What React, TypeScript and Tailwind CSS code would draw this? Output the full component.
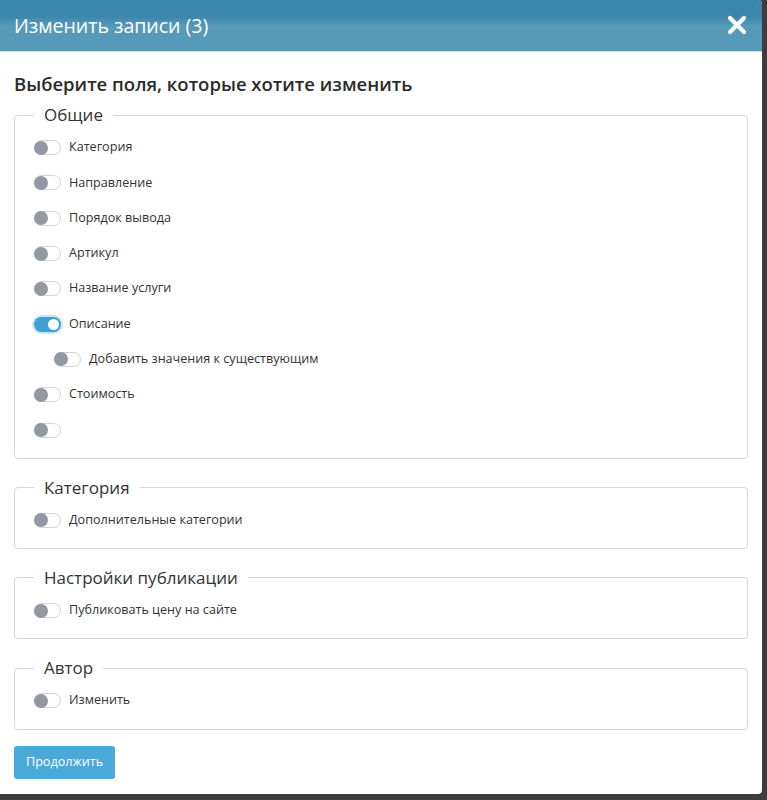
import React from "react";

type Field = { label: string; on?: boolean; nested?: boolean };

const general: Field[] = [
  { label: "Категория" },
  { label: "Направление" },
  { label: "Порядок вывода" },
  { label: "Артикул" },
  { label: "Название услуги" },
  { label: "Описание", on: true },
  { label: "Добавить значения к существующим", nested: true },
  { label: "Стоимость" },
  { label: "" },
];

const groups: { title: string; fields: Field[] }[] = [
  { title: "Категория", fields: [{ label: "Дополнительные категории" }] },
  { title: "Настройки публикации", fields: [{ label: "Публиковать цену на сайте" }] },
  { title: "Автор", fields: [{ label: "Изменить" }] },
];

const Toggle = ({ on }: { on?: boolean }) =>
  on ? (
    <span className="flex h-[15px] w-[27px] shrink-0 items-center justify-end rounded-full bg-[#3f9fd3] pr-[2px] ring-[2px] ring-[#c9e4f3]">
      <span className="h-[11px] w-[11px] rounded-full bg-white" />
    </span>
  ) : (
    <span className="flex h-[15px] w-[27px] shrink-0 items-center rounded-full border border-[#d2d2d2] bg-white">
      <span className="-ml-px h-[14px] w-[14px] rounded-full bg-[#9399a2]" />
    </span>
  );

const Row = ({ field }: { field: Field }) => (
  <div className={`flex h-[35.3px] items-center gap-2 ${field.nested ? "pl-5" : ""}`}>
    <Toggle on={field.on} />
    {field.label && <span className="text-[12.6px] text-[#333]">{field.label}</span>}
  </div>
);

const Group = ({ title, fields, first }: { title: string; fields: Field[]; first?: boolean }) => (
  <fieldset
    className={`rounded-[4px] border border-[#d6d6d6] px-[19px] pb-[10px] pt-[3px] ${first ? "" : "mt-[17px]"}`}
  >
    <legend className="px-[10px] text-[17px] leading-[24px] text-[#333]">{title}</legend>
    {fields.map((f, i) => (
      <Row key={i} field={f} />
    ))}
  </fieldset>
);

export default function App() {
  return (
    <div
      className="h-[800px] w-[767px] overflow-hidden bg-[#3d3d3d]"
      style={{ fontFamily: '"Open Sans", "Noto Sans", sans-serif' }}
    >
      <div className="flex h-[794px] w-[762px] flex-col overflow-hidden rounded-r-[4px] bg-white">
        <div className="flex h-[52px] shrink-0 items-center justify-between border-b border-[#d3e6f0] bg-[linear-gradient(#3a86ab_0,#3a86ab_16px,#5799b8_26px,#5799b8_100%)] pl-[14px] pr-[15px] pt-[1px]">
          <h1 className="text-[19.5px] leading-none text-white">Изменить записи (3)</h1>
          <svg width="20" height="20" viewBox="0 0 20 20" className="mt-[-2px]">
            <path d="M3 3 L17 17 M17 3 L3 17" stroke="white" strokeWidth="4.2" strokeLinecap="round" />
          </svg>
        </div>
        <div className="flex flex-1 flex-col px-[14px]">
          <h2 className="mt-[20px] text-[18.5px] font-semibold leading-[24px] text-[#2b2b2b]">
            Выберите поля, которые хотите изменить
          </h2>
          <div className="mt-[7px]">
            <Group title="Общие" fields={general} first />
            {groups.map((g) => (
              <Group key={g.title} title={g.title} fields={g.fields} />
            ))}
          </div>
          <div className="mt-[16px]">
            <button className="h-[33px] rounded-[3px] bg-[#4aa9d9] px-[12px] text-[12.6px] text-white">
              Продолжить
            </button>
          </div>
        </div>
      </div>
    </div>
  );
}
